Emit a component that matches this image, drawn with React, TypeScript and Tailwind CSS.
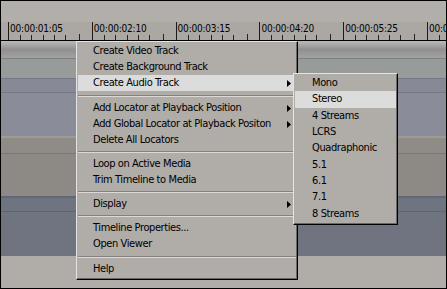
import React from "react";

type Item = { t?: string; arrow?: boolean; hl?: boolean; sep?: number };

const mainItems: Item[] = [
  { t: "Create Video Track" },
  { t: "Create Background Track" },
  { t: "Create Audio Track", arrow: true, hl: true },
  { sep: 9 },
  { t: "Add Locator at Playback Position", arrow: true },
  { t: "Add Global Locator at Playback Positon", arrow: true },
  { t: "Delete All Locators" },
  { sep: 8 },
  { t: "Loop on Active Media" },
  { t: "Trim Timeline to Media" },
  { sep: 8 },
  { t: "Display", arrow: true },
  { sep: 8 },
  { t: "Timeline Properties..." },
  { t: "Open Viewer" },
  { sep: 9 },
  { t: "Help" },
];

const subItems: Item[] = [
  { t: "Mono" },
  { t: "Stereo", hl: true },
  { t: "4 Streams" },
  { t: "LCRS" },
  { t: "Quadraphonic" },
  { t: "5.1" },
  { t: "6.1" },
  { t: "7.1" },
  { t: "8 Streams" },
];

const labels = ["00:00:01:05", "00:00:02:10", "00:00:03:15", "00:00:04:20", "00:00:05:25", "00:00:07:00"];

function Arrow() {
  return (
    <svg width="4" height="7" viewBox="0 0 4 7" className="block">
      <path d="M0 0 L4 3.5 L0 7 Z" fill="#000" />
    </svg>
  );
}

function Ticks() {
  const xs = [11, 22, 34, 45, 56, 70];
  return (
    <svg width="84" height="7" viewBox="0 0 84 7" className="absolute left-0 bottom-0">
      {xs.map((x, i) => (
        <rect key={i} x={x} y={i === 5 ? 1 : 2} width="1" height={i === 5 ? 6 : 5} fill="#222" />
      ))}
    </svg>
  );
}

export default function App() {
  return (
    <div className="relative w-[447px] h-[289px] overflow-hidden border border-black bg-[#b0aca8] font-['DejaVu_Sans_Condensed','DejaVu_Sans',sans-serif] text-black">
      <div className="flex flex-col">
        <div className="h-[21px] bg-[#b2afab]" />
        {/* ruler */}
        <div className="h-[18px] bg-[#aba8a4] flex pl-[7px] overflow-hidden">
          {labels.map((l, i) => (
            <div key={i} className="relative w-[83.8px] shrink-0 h-full border-l border-[#1a1a1a]">
              <div className="pl-[1px] text-[10px] leading-[12px] pt-[1px] tracking-[-0.2px] whitespace-nowrap">{l}</div>
              <Ticks />
            </div>
          ))}
        </div>
        <div className="h-[1px] bg-black" />
        {/* track 1 */}
        <div className="h-[17px] bg-gradient-to-b from-[#bababa] via-[#909090] to-[#a2a2a2]" />
        <div className="h-[1px] bg-[#7d807f]" />
        <div className="h-[19px] bg-[#979c9a]" />
        {/* track 2 */}
        <div className="h-[1px] bg-[#767985]" />
        <div className="h-[13px] bg-[#878a96]" />
        <div className="h-[1px] bg-[#767985]" />
        <div className="h-[43px] bg-[#8a8d99]" />
        {/* track 3 */}
        <div className="h-[2px] bg-[#a09a95]" />
        <div className="h-[15px] bg-[#8f8b87]" />
        <div className="h-[1px] bg-[#7c7975]" />
        <div className="h-[42px] bg-[#8d8a86]" />
        {/* track 4 */}
        <div className="h-[2px] bg-[#626777]" />
        <div className="h-[13px] bg-[#6f7481]" />
        <div className="h-[1px] bg-[#5f6470]" />
        <div className="h-[44px] bg-[#6f7480]" />
        <div className="h-[32px] bg-[#b0aca8]" />
      </div>

      {/* main menu */}
      <div className="absolute left-[75px] top-[40px] w-[222px] border-t border-l border-[#e4e4e4] border-r border-b border-r-black border-b-black bg-[#b0aca8] text-[11px] tracking-[-0.4px]">
        <div className="border-r border-b border-r-[#6a6866] border-b-[#6a6866] pt-[1px] pl-[1px] pb-[1px]">
          {mainItems.map((it, i) =>
            it.sep ? (
              <div key={i} className="flex flex-col justify-center" style={{ height: it.sep }}>
                <div className="h-[1px] bg-[#858180]" />
                <div className="h-[1px] bg-[#dcd8d4]" />
              </div>
            ) : (
              <div
                key={i}
                className={`h-[16px] flex items-center pl-[15px] pr-[5px] ${it.hl ? "bg-[#dcdcdc]" : ""}`}
              >
                <span className="flex-1 leading-[16px] whitespace-nowrap">{it.t}</span>
                {it.arrow && <Arrow />}
              </div>
            )
          )}
        </div>
      </div>

      {/* submenu */}
      <div className="absolute left-[292px] top-[72px] w-[105px] border-t border-l border-[#e4e4e4] border-r border-b border-r-black border-b-black bg-[#b0aca8] text-[11px] tracking-[-0.4px]">
        <div className="border-r border-b border-r-[#6a6866] border-b-[#6a6866] pt-[1px] pl-[1px] pb-[1px]">
          {subItems.map((it, i) => (
            <div key={i} className={`h-[16.33px] flex items-center pl-[17px] ${it.hl ? "bg-[#dcdcdc]" : ""}`}>
              <span className="leading-[16px] whitespace-nowrap">{it.t}</span>
            </div>
          ))}
        </div>
      </div>
    </div>
  );
}
